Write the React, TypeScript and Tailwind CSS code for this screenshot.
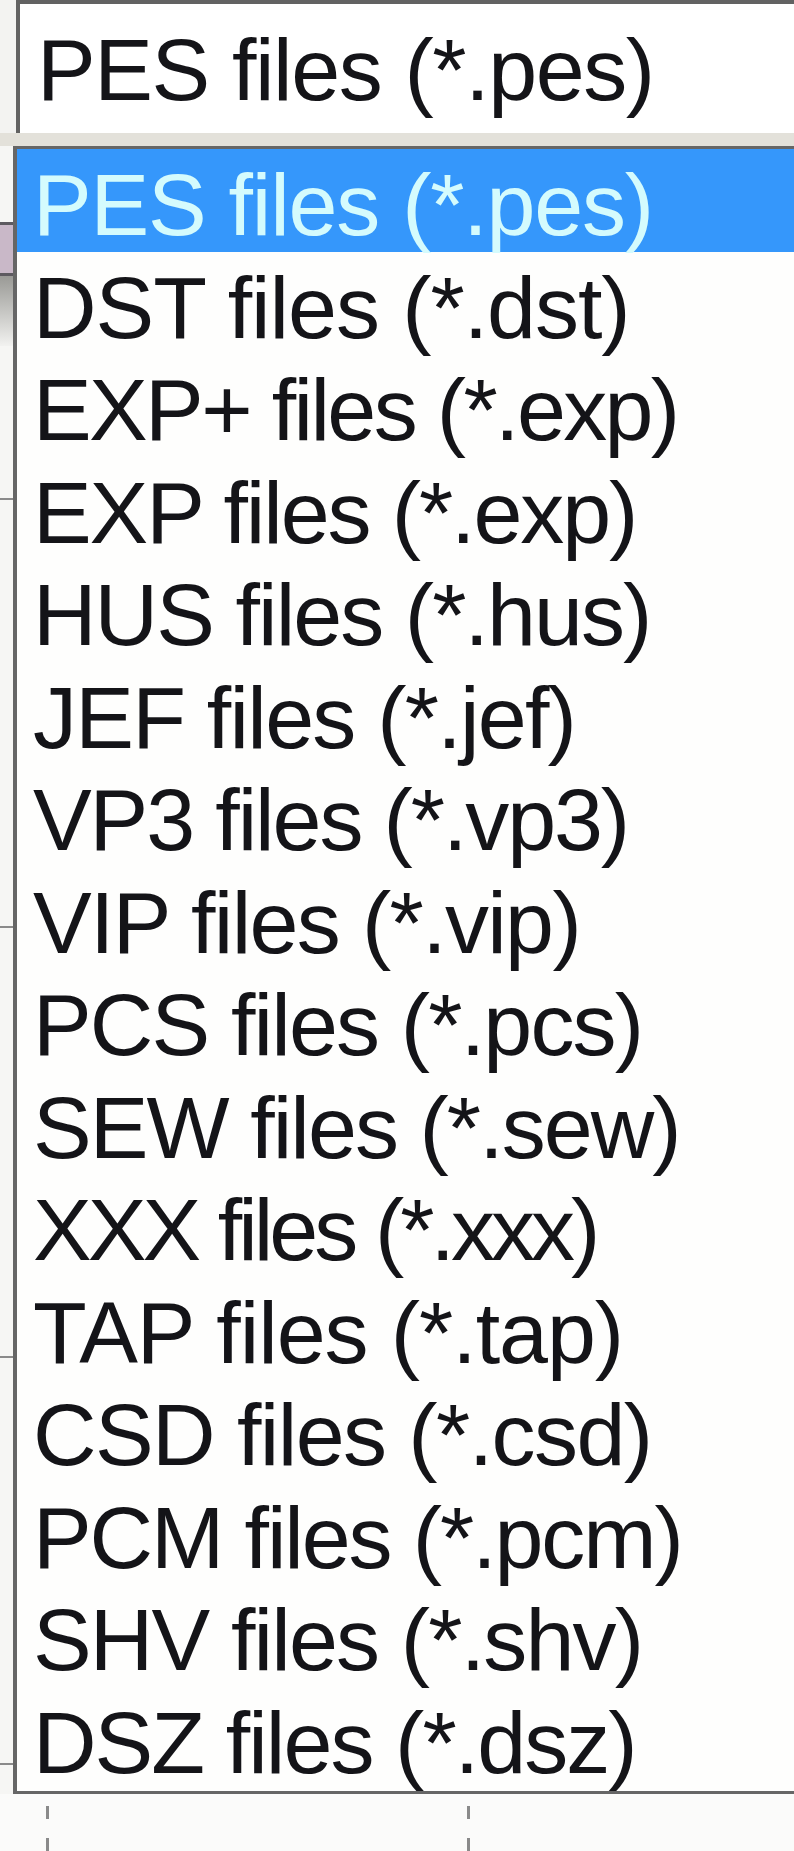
const formats = [
  { label: "PES files (*.pes)", track: "tracking-[-0.014em]" },
  { label: "DST files (*.dst)", track: "tracking-[-0.012em]" },
  { label: "EXP+ files (*.exp)", track: "tracking-[-0.03em]" },
  { label: "EXP files (*.exp)", track: "tracking-[-0.024em]" },
  { label: "HUS files (*.hus)", track: "tracking-[-0.022em]" },
  { label: "JEF files (*.jef)", track: "tracking-[-0.02em]" },
  { label: "VP3 files (*.vp3)", track: "tracking-[-0.024em]" },
  { label: "VIP files (*.vip)", track: "tracking-[-0.019em]" },
  { label: "PCS files (*.pcs)", track: "tracking-[-0.021em]" },
  { label: "SEW files (*.sew)", track: "tracking-[-0.022em]" },
  { label: "XXX files (*.xxx)", track: "tracking-[-0.045em]" },
  { label: "TAP files (*.tap)", track: "tracking-[-0.012em]" },
  { label: "CSD files (*.csd)", track: "tracking-[-0.018em]" },
  { label: "PCM files (*.pcm)", track: "tracking-[-0.024em]" },
  { label: "SHV files (*.shv)", track: "tracking-[-0.021em]" },
  { label: "DSZ files (*.dsz)", track: "tracking-[-0.022em]" },
];

const selected = 0;

export default function App() {
  return (
    <div
      className="w-[794px] h-[1851px] overflow-hidden flex flex-col bg-[#f6f6f4] text-[88px] leading-[102.5px] text-[#141418]"
      style={{ fontFamily: '"Liberation Sans", Arial, sans-serif' }}
    >
      {/* combo box edit field */}
      <div className="flex h-[137px]">
        <div className="w-[16px] bg-[#f3f3f1]" />
        <div className="flex-1 border-t-[4px] border-l-[4px] border-[#626262] bg-white pl-[17px] pt-[15px] whitespace-nowrap tracking-[-0.016em]">
          {formats[selected].label}
        </div>
      </div>
      <div className="h-[13px] bg-[#e3e1da]" />

      {/* dropdown list */}
      <div className="flex">
        {/* window behind, left edge */}
        <div className="w-[13px] flex flex-col">
          <div className="h-[76px]" />
          <div className="h-[54px] border-y-[3px] border-[#5d5a60] bg-[#c9b8c8]" />
          <div className="h-[70px] bg-gradient-to-b from-[#9a9a96] to-[#f2f2f0]" />
          <div className="h-[152px]" />
          <div className="h-[2px] bg-[#8a8a8a]" />
          <div className="h-[426px]" />
          <div className="h-[2px] bg-[#8a8a8a]" />
          <div className="h-[428px]" />
          <div className="h-[2px] bg-[#8a8a8a]" />
          <div className="h-[405px]" />
          <div className="h-[2px] bg-[#8a8a8a]" />
        </div>
        <div className="flex-1 border-l-[4px] border-y-[3px] border-[#666666] bg-[#fefefd] pb-[2px]">
          {formats.map((f, i) => (
            <div
              key={f.label}
              className={
                i === selected
                  ? `h-[102.5px] pl-[16px] pt-[5px] whitespace-nowrap bg-[#3597fb] text-[#d4fbfd] ${f.track}`
                  : `h-[102.5px] pl-[16px] pt-[5px] whitespace-nowrap ${f.track}`
              }
            >
              {f.label}
            </div>
          ))}
        </div>
      </div>

      {/* ruler ticks below */}
      <div className="flex pt-[12px] bg-[#fbfbfa] flex-1">
        <div className="ml-[46px] w-[3px] flex flex-col gap-[19px]">
          <div className="h-[13px] bg-[#8a8a8a]" />
          <div className="h-[13px] bg-[#8a8a8a]" />
        </div>
        <div className="ml-[418px] w-[3px] flex flex-col gap-[19px]">
          <div className="h-[13px] bg-[#8a8a8a]" />
          <div className="h-[13px] bg-[#8a8a8a]" />
        </div>
      </div>
    </div>
  );
}
